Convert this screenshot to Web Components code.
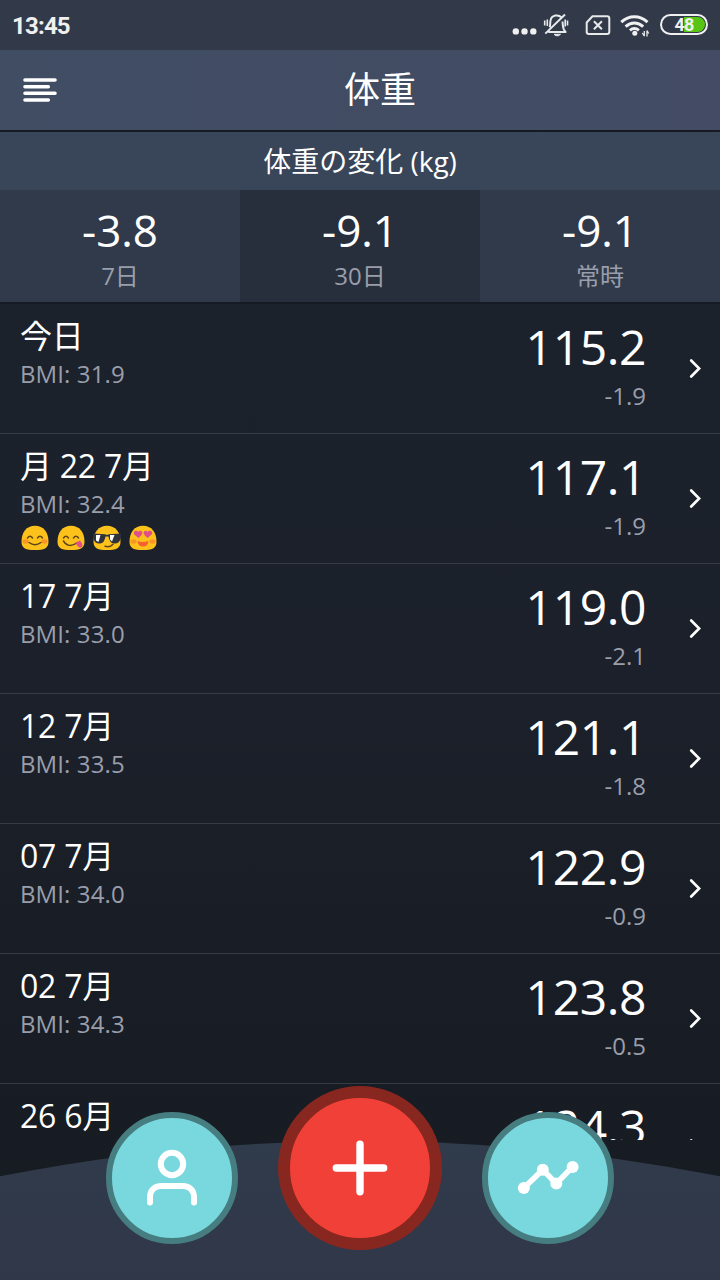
<!DOCTYPE html>
<html lang="ja">
<head>
<meta charset="utf-8">
<title>体重</title>
<style>
    html, body {
        margin: 0;
        height: 100%;
        background: #191d26;
    }
    body {
        font-family: "Open Sans", "Noto Sans CJK JP", sans-serif;
        color: #fff;
        overflow: hidden;
    }
</style>
</head>
<body>
<weight-app>
    <status-bar slot="status" time="13:45" battery="48"></status-bar>
    <app-header slot="header">体重</app-header>
    <change-summary slot="summary">
        <span slot="title">体重の変化 (kg)</span>
        <change-stat value="-3.8">7日</change-stat>
        <change-stat value="-9.1" selected>30日</change-stat>
        <change-stat value="-9.1">常時</change-stat>
    </change-summary>
    <weight-entry date="今日" bmi="31.9" weight="115.2" delta="-1.9"></weight-entry>
    <weight-entry date="月 22 7月" bmi="32.4" weight="117.1" delta="-1.9">
        <mood-icon type="smile"></mood-icon>
        <mood-icon type="yum"></mood-icon>
        <mood-icon type="cool"></mood-icon>
        <mood-icon type="love"></mood-icon>
    </weight-entry>
    <weight-entry date="17 7月" bmi="33.0" weight="119.0" delta="-2.1"></weight-entry>
    <weight-entry date="12 7月" bmi="33.5" weight="121.1" delta="-1.8"></weight-entry>
    <weight-entry date="07 7月" bmi="34.0" weight="122.9" delta="-0.9"></weight-entry>
    <weight-entry date="02 7月" bmi="34.3" weight="123.8" delta="-0.5"></weight-entry>
    <weight-entry date="26 6月" weight="124.3"></weight-entry>
    <bottom-dock slot="dock">
        <round-button>
            <svg width="120" height="120" viewBox="0 0 120 120" fill="none" stroke="#fff" stroke-width="6" stroke-linecap="round">
                <circle cx="60" cy="46" r="11.2"/>
                <path d="M38 84.5v-5.500c0-7 5-11 11-11h22c6 0 11 4 11 11v5.500"/>
            </svg>
        </round-button>
        <round-button primary>
            <svg width="140" height="140" viewBox="0 0 140 140" fill="none" stroke="#fff" stroke-width="7.4" stroke-linecap="round">
                <path d="M70 46.3v47.4M46.3 70h47.4"/>
            </svg>
        </round-button>
        <round-button>
            <svg width="120" height="120" viewBox="0 0 120 120" fill="none" stroke="#fff" stroke-width="5.6">
                <path d="M35.8 70l19-18.2 13.5 13.8 16.3-16.8"/>
                <g fill="#fff" stroke="none">
                    <circle cx="35.8" cy="70" r="6"/>
                    <circle cx="54.8" cy="51.8" r="6"/>
                    <circle cx="68.3" cy="65.6" r="6"/>
                    <circle cx="84.6" cy="49" r="6"/>
                </g>
            </svg>
        </round-button>
    </bottom-dock>
</weight-app>

<script>
class WeightApp extends HTMLElement {
    constructor() {
        super();
        this.attachShadow({ mode: 'open' });
        this.shadowRoot.innerHTML = `
            <style>
                :host {
                    display: flex;
                    flex-direction: column;
                    position: relative;
                    width: 720px;
                    height: 1280px;
                    overflow: hidden;
                    background: linear-gradient(180deg, #1c222b 300px, #1b202a 700px, #171b22 1180px);
                }
                .list {
                    height: 836px;
                    overflow: hidden;
                }
            </style>
            <slot name="status"></slot>
            <slot name="header"></slot>
            <slot name="summary"></slot>
            <main class="list"><slot></slot></main>
            <slot name="dock"></slot>
        `;
    }
}

class StatusBar extends HTMLElement {
    constructor() {
        super();
        this.attachShadow({ mode: 'open' });
        this.shadowRoot.innerHTML = `
            <style>
                :host {
                    display: flex;
                    align-items: center;
                    height: 50px;
                    box-sizing: border-box;
                    padding: 0 12px;
                    background: #323a4a;
                    color: #f0f0f0;
                    font-family: Roboto, sans-serif;
                }
                .time {
                    flex: 1;
                    font-size: 24px;
                    font-weight: 700;
                    line-height: 50px;
                    letter-spacing: -.8px;
                    padding-top: 2px;
                }
                svg {
                    display: block;
                }
                .battery {
                    display: flex;
                    justify-content: center;
                    align-items: center;
                    box-sizing: border-box;
                    width: 48px;
                    height: 21px;
                    margin: 0 0 1px 9px;
                    border: 2px solid #f0f0f0;
                    border-radius: 11px;
                    background: linear-gradient(90deg, transparent 50%, #58c414 50%) content-box;
                    padding: 1px;
                    font-size: 18px;
                    font-weight: 700;
                    line-height: 17px;
                    letter-spacing: -.8px;
                }
            </style>
            <span class="time"></span>
            <svg width="139" height="50" viewBox="0 0 139 50" fill="none" stroke="#e8e9eb" stroke-width="2" stroke-linejoin="round">
                <g fill="#f0f0f0" stroke="none">
                    <circle cx="3.800" cy="31.400" r="3.200"/>
                    <circle cx="12.500" cy="31.400" r="3.200"/>
                    <circle cx="21.300" cy="31.400" r="3.200"/>
                </g>
                <path d="M36.300 31.900h17.300c-2-1.800-2.600-3.700-2.800-6.900l-.3-3.500M49.500 17.500c-3-3.300-9.700-2.700-10.900 2.600-.6 3-.2 5-.9 7.200M33.300 33.600L53 14.500"/>
                <path d="M42 34.300h6.500l-2 1.400H44z" fill="#e8e9eb" stroke-width="1"/>
                <path d="M32.700 20.500v5M35.300 19.500v6.500M53.200 19.500v7M55.500 20.500v5" stroke-width="1.600"/>
                <path d="M80.500 16.300H95q2.300 0 2.300 2.300v13.100q0 2.300-2.300 2.300H77q-2.300 0-2.300-2.300v-9.200z"/>
                <path d="M81.900 21.300l8 8M89.900 21.300l-8 8"/>
                <g stroke="#f0f0f0" stroke-width="3">
                    <path d="M109.300 22.200c7.800-7.200 18.400-7.200 26.200 0"/>
                    <path d="M113.600 26.600c5.400-4.700 12-4.700 17.600 0"/>
                    <path d="M117.900 30.300c3-2.400 6-2.400 9 0"/>
                </g>
                <circle cx="122.800" cy="33.300" r="2.500" fill="#f0f0f0" stroke="none"/>
                <path d="M132.300 31v5.300M130.300 33l2 3M135 36.500v-6M136.700 33.500l-1.700-3" stroke-width="1.300"/>
            </svg>
            <span class="battery"></span>
        `;
    }

    connectedCallback() {
        this.shadowRoot.querySelector('.time').textContent = this.getAttribute('time');
        this.shadowRoot.querySelector('.battery').textContent = this.getAttribute('battery');
    }
}

class AppHeader extends HTMLElement {
    constructor() {
        super();
        this.attachShadow({ mode: 'open' });
        this.shadowRoot.innerHTML = `
            <style>
                :host {
                    display: grid;
                    grid-template-columns: 80px 1fr 40px;
                    align-items: center;
                    height: 80px;
                    background: linear-gradient(90deg, #404d63, #434c64);
                    border-bottom: 2px solid #161a23;
                }
                svg {
                    display: block;
                }
                h1 {
                    margin: 0;
                    font-size: 36px;
                    font-weight: 400;
                    line-height: 80px;
                    text-align: center;
                }
            </style>
            <svg width="80" height="80" viewBox="0 0 80 80" stroke="#fff" stroke-width="3.600" stroke-linecap="round">
                <path d="M25 30h30M25 36.700h23.300M25 43.300h30M25 50h23.300"/>
            </svg>
            <h1><slot></slot></h1>
        `;
    }
}

class ChangeSummary extends HTMLElement {
    constructor() {
        super();
        this.attachShadow({ mode: 'open' });
        this.shadowRoot.innerHTML = `
            <style>
                :host {
                    display: block;
                    border-bottom: 2px solid #161a23;
                }
                .title {
                    height: 58px;
                    background: #394659;
                    font-size: 28px;
                    line-height: 58px;
                    text-align: center;
                }
                .stats {
                    display: grid;
                    grid-template-columns: repeat(3, 1fr);
                    height: 112px;
                    background: #303a4a;
                }
            </style>
            <div class="title"><slot name="title"></slot></div>
            <div class="stats"><slot></slot></div>
        `;
    }
}

class ChangeStat extends HTMLElement {
    constructor() {
        super();
        this.attachShadow({ mode: 'open' });
        this.shadowRoot.innerHTML = `
            <style>
                :host {
                    display: block;
                    padding-top: 12px;
                    text-align: center;
                }
                :host([selected]) {
                    background: #272f3d;
                }
                .value {
                    height: 56px;
                    font-size: 44px;
                    line-height: 57px;
                }
                .label {
                    color: #9a9eab;
                    font-size: 24px;
                    line-height: 36px;
                }
            </style>
            <div class="value"></div>
            <div class="label"><slot></slot></div>
        `;
    }

    connectedCallback() {
        this.shadowRoot.querySelector('.value').textContent = this.getAttribute('value');
    }
}

class WeightEntry extends HTMLElement {
    constructor() {
        super();
        this.attachShadow({ mode: 'open' });
        this.shadowRoot.innerHTML = `
            <style>
                :host {
                    display: flex;
                    box-sizing: border-box;
                    height: 130px;
                    padding: 12px 19px 0 20px;
                    border-bottom: 1px solid #363b45;
                }
                .info {
                    flex: 1;
                }
                .date {
                    font-size: 32px;
                    line-height: 40px;
                    letter-spacing: -.25px;
                }
                .bmi, .delta {
                    height: 36px;
                    color: #9a9eab;
                    font-size: 24px;
                    line-height: 36px;
                }
                .bmi {
                    letter-spacing: .1px;
                }
                .moods {
                    display: flex;
                    gap: 8px;
                    padding: 3px 0 0 .5px;
                }
                .numbers {
                    text-align: right;
                }
                .weight {
                    font-size: 48px;
                    line-height: 62px;
                    letter-spacing: -.4px;
                }
                svg {
                    margin: 42px 0 0 43px;
                }
            </style>
            <div class="info">
                <div class="date"></div>
                <div class="bmi"></div>
                <div class="moods"><slot></slot></div>
            </div>
            <div class="numbers">
                <div class="weight"></div>
                <div class="delta"></div>
            </div>
            <svg width="12" height="21" viewBox="0 0 12 21" fill="none" stroke="#fff" stroke-width="2.600" stroke-linecap="round">
                <path d="M2.200 2.500l8 8-8 8"/>
            </svg>
        `;
    }

    connectedCallback() {
        const bmi = this.getAttribute('bmi');
        this.shadowRoot.querySelector('.date').textContent = this.getAttribute('date');
        this.shadowRoot.querySelector('.bmi').textContent = bmi ? 'BMI: ' + bmi : '';
        this.shadowRoot.querySelector('.weight').textContent = this.getAttribute('weight');
        this.shadowRoot.querySelector('.delta').textContent = this.getAttribute('delta') || '';
    }
}

const closedEyes = '<path d="M6.500 13q2.500-3.500 5 0M16.500 13q2.500-3.500 5 0"/>';
const cheeks = '<g fill="#f98a2b" stroke="none" opacity=".8"><ellipse cx="4.500" cy="16.500" rx="3" ry="2.200"/><ellipse cx="23.500" cy="16.500" rx="3" ry="2.200"/></g>';
const moods = {
    smile: cheeks + closedEyes + '<path d="M8 17.500q6 4.500 12 0"/>',
    yum: closedEyes + '<path d="M6.500 16q5 8 14 1.500"/><path d="M18.500 18l4.500-2.500q4 5 1.500 6.800t-6-4.300z" fill="#df4f8c" stroke="none"/>',
    cool: '<path d="M0 8.500l12 .7 2 .8 2-.8 12-.7-.7 6q-1.500 4.500-6.300 4-4.500-.5-5.500-7h-3q-1 6.500-5.500 7-4.800.5-6.300-4z" fill="#30343a" stroke="none"/><path d="M3 10h4.500l-2 7-2.500-1.500zM17 10h4.500l-2.500 6.500-2-2z" fill="#fff" stroke="none"/><path d="M12 21.300q5 1.500 8-2"/>',
    love: cheeks + '<g fill="#df4f8c" stroke="none"><path d="M9.500 13L5 9.200q-.5-3.700 2.200-3.400 1.500 0 2 1.300 1.200-2 3-1 2.200 1.200.3 4z"/><path d="M18.500 13l4.500-3.800q.5-3.700-2.200-3.400-1.500 0-2 1.300-1.200-2-3-1-2.200 1.200-.3 4z"/><path d="M8.500 16q5.500 2 11 0-.5 5.500-5.500 5.500T8.500 16z" fill="#f4602f"/></g>'
};

class MoodIcon extends HTMLElement {
    constructor() {
        super();
        this.attachShadow({ mode: 'open' });
    }

    connectedCallback() {
        this.shadowRoot.innerHTML = `
            <style>
                :host {
                    display: block;
                    width: 28px;
                    height: 26px;
                }
                svg {
                    display: block;
                }
            </style>
            <svg width="28" height="26" viewBox="0 0 28 26" fill="none" stroke="#60431a" stroke-width="1.500" stroke-linecap="round">
                <path d="M14 .8C5.500.8.500 7.500.500 16.500c0 7 4.500 8.500 13.500 8.500s13.500-1.500 13.500-8.500C27.500 7.500 22.500.8 14 .8z" fill="#fcc21b" stroke="none"/>
                ${moods[this.getAttribute('type')]}
            </svg>
        `;
    }
}

class BottomDock extends HTMLElement {
    constructor() {
        super();
        this.attachShadow({ mode: 'open' });
        this.shadowRoot.innerHTML = `
            <style>
                /* floats over the end of the list */
                :host {
                    position: absolute;
                    left: 0;
                    right: 0;
                    bottom: 0;
                    height: 194px;
                }
                .curve {
                    position: absolute;
                    left: 0;
                    bottom: 0;
                }
                .buttons {
                    position: relative;
                    display: flex;
                    justify-content: center;
                    gap: 40px;
                }
            </style>
            <svg class="curve" width="720" height="140" viewBox="0 0 720 140">
                <defs>
                    <linearGradient id="fill" x1="0" y1="0" x2="0" y2="1">
                        <stop offset="0" stop-color="#303b4b"/>
                        <stop offset="1" stop-color="#303749"/>
                    </linearGradient>
                </defs>
                <path d="M0 36.300A1853 1853 0 0 1 720 36.300V140H0z" fill="url(#fill)"/>
            </svg>
            <div class="buttons"><slot></slot></div>
        `;
    }
}

class RoundButton extends HTMLElement {
    constructor() {
        super();
        this.attachShadow({ mode: 'open' });
        this.shadowRoot.innerHTML = `
            <style>
                :host {
                    display: block;
                    margin-top: 26px;
                }
                :host([primary]) {
                    margin-top: 0;
                }
                button {
                    display: block;
                    box-sizing: content-box;
                    width: 120px;
                    height: 120px;
                    padding: 0;
                    border: 6px solid #467d80;
                    border-radius: 50%;
                    background: #79d8dd;
                    cursor: pointer;
                }
                :host([primary]) button {
                    width: 140px;
                    height: 140px;
                    border: 12px solid #88271f;
                    background: #f14038;
                }
                ::slotted(svg) {
                    display: block;
                }
            </style>
            <button type="button"><slot></slot></button>
        `;
    }
}

customElements.define('weight-app', WeightApp);
customElements.define('status-bar', StatusBar);
customElements.define('app-header', AppHeader);
customElements.define('change-summary', ChangeSummary);
customElements.define('change-stat', ChangeStat);
customElements.define('weight-entry', WeightEntry);
customElements.define('mood-icon', MoodIcon);
customElements.define('bottom-dock', BottomDock);
customElements.define('round-button', RoundButton);
</script>
</body>
</html>
